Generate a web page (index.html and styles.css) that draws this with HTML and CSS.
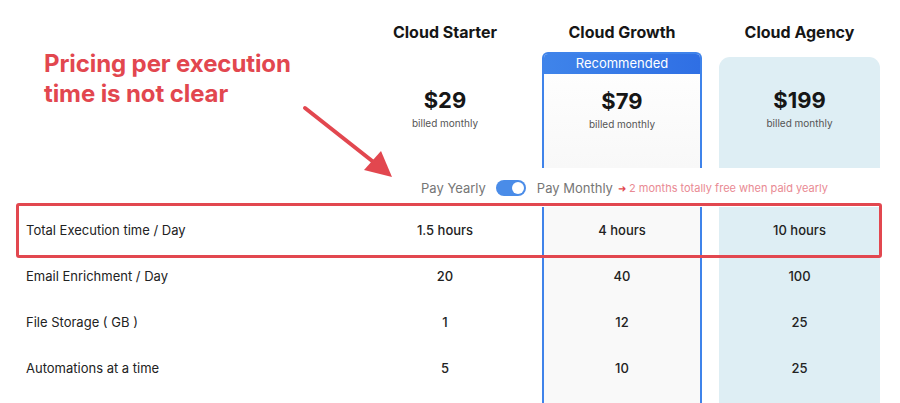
FILE: index.html
```html
<!DOCTYPE html>
<html>
<head>
<meta charset="utf-8">
<link rel="stylesheet" href="styles.css">
</head>
<body>
<div class="page">
  <div class="grid">
    <div class="note">Pricing per execution<br>time is not clear</div>
    <div class="plan-head c2">Cloud Starter</div>
    <div class="plan-head c3">Cloud Growth</div>
    <div class="plan-head c4">Cloud Agency</div>

    <div class="card starter">
      <div class="price">$29</div>
      <div class="billed">billed monthly</div>
    </div>
    <div class="card growth">
      <div class="rec">Recommended</div>
      <div class="price">$79</div>
      <div class="billed">billed monthly</div>
    </div>
    <div class="card agency">
      <div class="price">$199</div>
      <div class="billed">billed monthly</div>
    </div>

    <div class="spacer"></div>
    <div class="toggle-row">
      <span class="pay">Pay Yearly</span>
      <span class="switch"><span class="knob"></span></span>
      <span class="pay">Pay Monthly</span>
      <span class="promo"><span class="promo-arrow">➜</span> 2 months totally free when paid yearly</span>
    </div>

    <div class="label">Total Execution time / Day</div>
    <div class="val">1.5 hours</div>
    <div class="val g">4 hours</div>
    <div class="val a">10 hours</div>

    <div class="label">Email Enrichment / Day</div>
    <div class="val">20</div>
    <div class="val g">40</div>
    <div class="val a">100</div>

    <div class="label">File Storage ( GB )</div>
    <div class="val">1</div>
    <div class="val g">12</div>
    <div class="val a">25</div>

    <div class="label">Automations at a time</div>
    <div class="val">5</div>
    <div class="val g">10</div>
    <div class="val a">25</div>

    <div class="label"></div>
    <div class="val"></div>
    <div class="val g"></div>
    <div class="val a"></div>
  </div>

  <div class="highlight"></div>
  <svg class="arrow" width="900" height="403" viewBox="0 0 900 403">
    <line x1="305" y1="108" x2="376" y2="164" stroke="#e2474f" stroke-width="4" stroke-linecap="round"/>
    <polygon points="392,177 364,170 381,151" fill="#e2474f"/>
  </svg>
</div>
</body>
</html>
```

FILE: styles.css
```css
* { box-sizing: border-box; }
html, body { margin: 0; padding: 0; background: #fff; }
body { font-family: Inter, "Noto Sans", sans-serif; color: #1f1f1f; }

.page {
  position: relative;
  width: 900px;
  height: 403px;
  overflow: hidden;
  padding-left: 18px;
}

.grid {
  display: grid;
  grid-template-columns: 330px 160px 160px 161px;
  grid-template-rows: 52px 116px 39px 46px 46px 46px 46px 30px;
  column-gap: 17px;
}

.note {
  grid-column: 1;
  grid-row: 1 / 3;
  padding: 49px 0 0 26px;
  color: #e2474f;
  font-size: 24px;
  font-weight: 700;
  line-height: 30px;
  letter-spacing: -0.1px;
}

.plan-head {
  grid-row: 1;
  display: flex;
  align-items: flex-end;
  justify-content: center;
  padding-bottom: 10px;
  font-size: 16px;
  font-weight: 700;
  line-height: 20px;
  color: #161616;
}
.c2 { grid-column: 2; }
.c3 { grid-column: 3; }
.c4 { grid-column: 4; }

.card {
  grid-row: 2;
  display: flex;
  flex-direction: column;
  align-items: center;
}
.starter { grid-column: 2; padding-top: 35px; }
.growth {
  grid-column: 3;
  border: 2px solid #3f83ea;
  border-bottom: none;
  border-radius: 6px 6px 0 0;
  background: linear-gradient(#ffffff, #f8f8f8);
  overflow: hidden;
}
.agency {
  grid-column: 4;
  margin-top: 5px;
  padding-top: 30px;
  background: #deeef4;
  border-radius: 11px 11px 0 0;
}

.rec {
  width: 100%;
  height: 20px;
  background: linear-gradient(90deg, #3f84ea, #2f6fe4);
  color: #fff;
  font-size: 13px;
  line-height: 19px;
  text-align: center;
  margin-bottom: 14px;
}

.price {
  font-size: 22px;
  font-weight: 700;
  line-height: 26px;
  color: #161616;
}
.billed {
  margin-top: 3px;
  font-size: 10px;
  line-height: 14px;
  color: #555;
}

.spacer { grid-column: 1; grid-row: 3; }

.toggle-row {
  grid-column: 2 / 5;
  grid-row: 3;
  display: flex;
  align-items: center;
  justify-content: center;
  padding-left: 4px;
  background: #fff;
}
.pay {
  font-size: 13px;
  color: #767676;
}
.switch {
  width: 30px;
  height: 16px;
  border-radius: 8px;
  background: #4a8ce8;
  margin: 0 11px 0 10px;
  display: flex;
  align-items: center;
  justify-content: flex-end;
  padding-right: 2px;
}
.knob {
  width: 12px;
  height: 12px;
  border-radius: 50%;
  background: #fff;
}
.promo {
  margin-left: 5px;
  font-size: 11px;
  color: #e98a93;
}
.promo-arrow { color: #e2474f; font-size: 10px; }

.label {
  grid-column: 1;
  display: flex;
  align-items: center;
  padding-left: 8px;
  font-size: 13px;
  color: #222;
}
.val {
  display: flex;
  align-items: center;
  justify-content: center;
  font-size: 13px;
  font-weight: 500;
  color: #222;
}
.val.g {
  border-left: 2px solid #3f83ea;
  border-right: 2px solid #3f83ea;
  background: #f9f9f9;
}
.val.a { background: #deeef4; }

.highlight {
  position: absolute;
  left: 16px;
  top: 203px;
  width: 866px;
  height: 55px;
  border: 3px solid #e2474f;
  border-radius: 3px;
}

.arrow {
  position: absolute;
  left: 0;
  top: 0;
  pointer-events: none;
}
```
